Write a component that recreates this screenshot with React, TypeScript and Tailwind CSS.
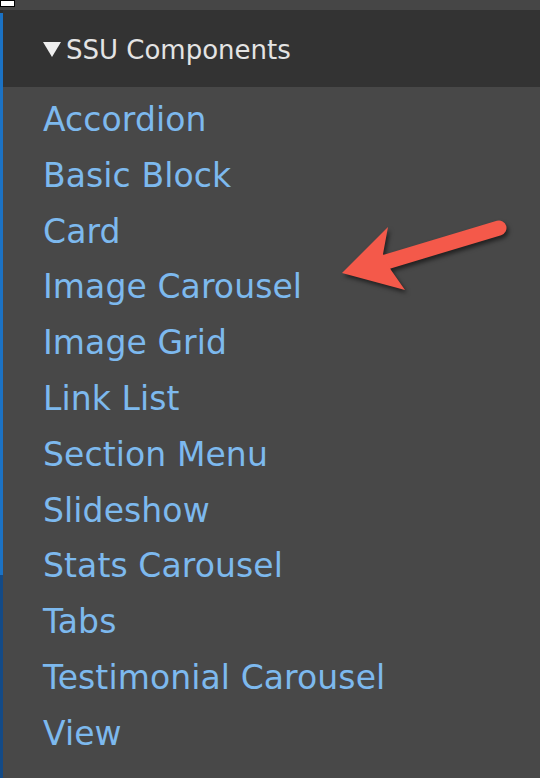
const items = [
  "Accordion",
  "Basic Block",
  "Card",
  "Image Carousel",
  "Image Grid",
  "Link List",
  "Section Menu",
  "Slideshow",
  "Stats Carousel",
  "Tabs",
  "Testimonial Carousel",
  "View",
];

function Arrow() {
  return (
    <svg
      className="pointer-events-none absolute left-0 top-0 drop-shadow-[2px_3px_2px_rgba(0,0,0,0.55)]"
      width="540"
      height="778"
      viewBox="0 0 540 778"
    >
      <line x1="386" y1="262" x2="499" y2="228" stroke="#f4594a" strokeWidth="15" strokeLinecap="round" />
      <polygon points="342,273 388,227 383,254 391,270 405,290" fill="#f4594a" />
    </svg>
  );
}

export default function App() {
  return (
    <div className="relative flex h-[778px] w-[540px] flex-col overflow-hidden bg-[#484848] font-['DejaVu_Sans',sans-serif]">
      <div className="h-[10px] shrink-0 bg-[#464646]" />
      <div className="flex min-h-0 flex-1">
        <div className="flex w-[3px] shrink-0 flex-col">
          <div className="h-[3px] bg-[#2e2e2e]" />
          <div className="h-[562px] bg-[#1b72c4]" />
          <div className="flex-1 bg-[#134a86]" />
        </div>
        <div className="flex min-w-0 flex-1 flex-col">
          <div className="flex h-[77px] shrink-0 items-center bg-[#333333] pl-[40px] pt-[2px]">
            <svg width="18" height="15" viewBox="0 0 18 15" className="mr-[5px] shrink-0">
              <polygon points="0,0 18,0 9,15" fill="#efefef" />
            </svg>
            <span className="text-[26px] leading-none text-[#e4e4e4]">SSU Components</span>
          </div>
          <ul className="flex flex-col pl-[40px] pt-[5px]">
            {items.map((name) => (
              <li key={name} className="text-[33px] leading-[55.8px] tracking-[0.1px] text-[#7db9ee]">
                {name}
              </li>
            ))}
          </ul>
        </div>
      </div>
      <div className="absolute left-0 top-0 h-[7px] w-[15px] border border-black bg-white" />
      <Arrow />
    </div>
  );
}
